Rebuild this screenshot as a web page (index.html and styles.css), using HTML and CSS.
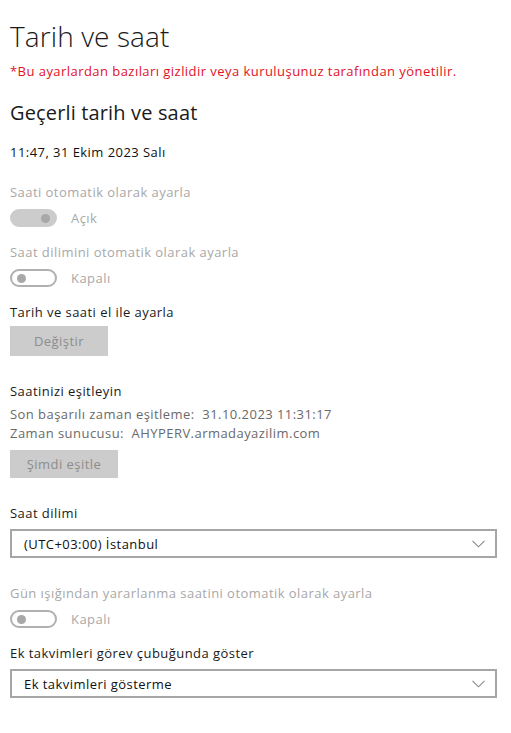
FILE: index.html
```html
<!DOCTYPE html>
<html>
<head>
    <title>Tarih ve saat</title>
    <link rel="stylesheet" href="styles.css">
</head>
<body>
    <div class="page">
        <h1>Tarih ve saat</h1>
        <p class="notice">*Bu ayarlardan bazıları gizlidir veya kuruluşunuz tarafından yönetilir.</p>

        <h2>Geçerli tarih ve saat</h2>
        <p class="now">11:47, 31 Ekim 2023 Salı</p>

        <p class="label disabled first">Saati otomatik olarak ayarla</p>
        <div class="toggle-row">
            <span class="toggle on"><span class="knob"></span></span>
            <span class="toggle-text">Açık</span>
        </div>

        <p class="label disabled">Saat dilimini otomatik olarak ayarla</p>
        <div class="toggle-row">
            <span class="toggle"><span class="knob"></span></span>
            <span class="toggle-text">Kapalı</span>
        </div>

        <p class="label">Tarih ve saati el ile ayarla</p>
        <button class="btn btn-change" type="button" disabled>Değiştir</button>

        <p class="label section">Saatinizi eşitleyin</p>
        <div class="info">
            Son başarılı zaman eşitleme:&nbsp; 31.10.2023 11:31:17<br>
            Zaman sunucusu:&nbsp; AHYPERV.armadayazilim.com
        </div>
        <button class="btn btn-sync" type="button" disabled>Şimdi eşitle</button>

        <p class="label section">Saat dilimi</p>
        <div class="select">
            <span>(UTC+03:00) İstanbul</span>
            <svg class="chevron" width="13" height="8" viewBox="0 0 13 8"><path d="M0.5 0.8 L6.5 6.8 L12.5 0.8" fill="none" stroke="#8a8a8a" stroke-width="1.1"/></svg>
        </div>

        <p class="label disabled section">Gün ışığından yararlanma saatini otomatik olarak ayarla</p>
        <div class="toggle-row">
            <span class="toggle"><span class="knob"></span></span>
            <span class="toggle-text">Kapalı</span>
        </div>

        <p class="label">Ek takvimleri görev çubuğunda göster</p>
        <div class="select">
            <span>Ek takvimleri gösterme</span>
            <svg class="chevron" width="13" height="8" viewBox="0 0 13 8"><path d="M0.5 0.8 L6.5 6.8 L12.5 0.8" fill="none" stroke="#8a8a8a" stroke-width="1.1"/></svg>
        </div>
    </div>
</body>
</html>
```

FILE: styles.css
```css
body {
    margin: 0;
    background: #ffffff;
    font-family: "Open Sans", "Noto Sans", sans-serif;
    font-size: 13px;
    letter-spacing: 0.45px;
    color: #1a1a1a;
}
.page {
    padding: 0 14px 0 10px;
}
h1 {
    margin: 18px 0 0;
    font-size: 28px;
    font-weight: 300;
    letter-spacing: 0.1px;
    line-height: 36px;
    color: #1a1a1a;
}
p {
    margin: 0;
    line-height: 19px;
}
.notice {
    margin-top: 8px;
    color: #e3101e;
}
h2 {
    margin: 18px 0 0;
    font-size: 20px;
    font-weight: 400;
    letter-spacing: 0.15px;
    line-height: 28px;
}
.now {
    margin-top: 16px;
    color: #111;
}
.label {
    margin-top: 16px;
    color: #1a1a1a;
}
.label.first {
    margin-top: 21px;
}
.label.section {
    margin-top: 26px;
}
.disabled {
    color: #a8a8a8;
}
.toggle-row {
    display: flex;
    align-items: center;
    gap: 14px;
    margin-top: 7px;
    height: 18px;
}
.toggle {
    box-sizing: border-box;
    width: 47px;
    height: 18px;
    border: 2px solid #b0b0b0;
    border-radius: 9px;
    display: flex;
    align-items: center;
    padding: 0 5px;
}
.toggle .knob {
    width: 9px;
    height: 9px;
    border-radius: 50%;
    background: #a8a8a8;
}
.toggle.on {
    background: #cccccc;
    border-color: #cccccc;
    justify-content: flex-end;
}
.toggle-text {
    color: #a8a8a8;
}
.btn {
    display: block;
    margin-top: 4px;
    height: 30px;
    border: none;
    background: #cccccc;
    color: #8c8c8c;
    font-family: inherit;
    font-size: 13px;
    letter-spacing: 0.45px;
    padding: 0;
}
.btn-change {
    width: 98px;
}
.btn-sync {
    width: 108px;
    height: 28px;
    margin-top: 7px;
}
.info {
    margin-top: 4px;
    line-height: 19px;
    color: #6a6a6a;
}
.select {
    box-sizing: border-box;
    display: flex;
    align-items: center;
    justify-content: space-between;
    margin-top: 6px;
    height: 29px;
    border: 2px solid #a6a6a6;
    padding: 0 10px 0 12px;
    color: #111;
}
.chevron {
    display: block;
}
```
